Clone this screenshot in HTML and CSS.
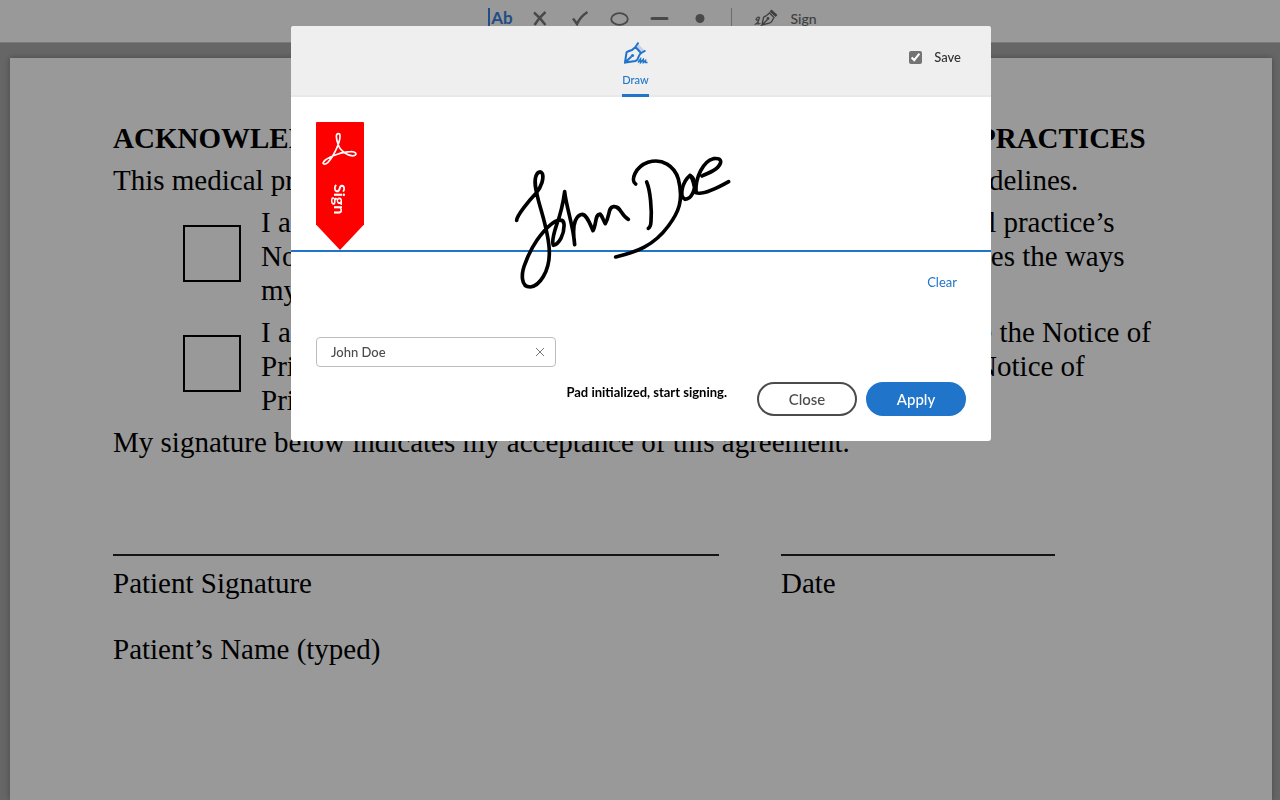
FILE: index.html
```html
<!doctype html>
<html lang="en">

<head>
    <meta charset="UTF-8">
    <meta name="viewport" content="width=device-width, initial-scale=1.0">
    <title>Sign document</title>
    <link rel="stylesheet" href="styles.css">
</head>

<body>
    <div class="toolbar">
        <button type="button" class="tool active" aria-label="Add text"><span class="text-tool">Ab</span></button>
        <button type="button" class="tool" aria-label="Add cross">
            <svg width="20" height="20" viewBox="0 0 20 20"><path d="M4 4.500Q10 9.500 15.500 17M15.500 4Q9 9.500 4.500 17" /></svg>
        </button>
        <button type="button" class="tool" aria-label="Add checkmark">
            <svg width="20" height="20" viewBox="0 0 20 20"><path d="M3 10.500Q5 13 7 16Q10 9 17.500 4" /></svg>
        </button>
        <button type="button" class="tool" aria-label="Add circle">
            <svg width="20" height="20" viewBox="0 0 20 20"><ellipse cx="9.500" cy="11" rx="8.300" ry="5.800" stroke-width="1.800" /></svg>
        </button>
        <button type="button" class="tool" aria-label="Add line">
            <svg width="20" height="20" viewBox="0 0 20 20"><path d="M2 10.500H17" stroke-width="3" stroke-linecap="round" /></svg>
        </button>
        <button type="button" class="tool" aria-label="Add dot">
            <svg width="20" height="20" viewBox="0 0 20 20"><circle cx="10" cy="10.500" r="4.500" class="fill" /></svg>
        </button>
        <span class="divider"></span>
        <button type="button" class="tool sign-tool">
            <svg width="24" height="20" viewBox="0 0 24 20">
                <path d="M8 17L9.500 9.500Q10 8.500 12 8L15.500 5L20 9.500L18.500 12Q18 14 16 15L8 17L13.500 11.500" stroke-width="1.300" />
                <circle cx="14" cy="10.500" r="1.400" class="fill" />
                <path d="M15.500 3.500L17.500 1.500L23.500 7L21.500 9Z" class="fill" />
                <path d="M0.500 16.500Q4 16 5.500 9.500Q3.500 8 2 11.500Q2.500 13 4.500 11.500L4 16L6.500 15.500" stroke-width="1.200" />
            </svg>
            <span>Sign</span>
        </button>
    </div>

    <main class="viewer">
        <article class="page">
            <h1>ACKNOWLEDGEMENT OF RECEIPT OF NOTICE OF PRIVACY PRACTICES</h1>
            <p>This medical practice is in full compliance with HIPAA general privacy guidelines.</p>
            <div class="option">
                <input type="checkbox" id="received">
                <label for="received">I acknowledge that I have been provided a copy of this medical practice’s<br>
                    Notice of Privacy Practices. This general notice clearly describes the ways<br>
                    my information is used.</label>
            </div>
            <div class="option">
                <input type="checkbox" id="declined">
                <label for="declined">I acknowledge that I have been given an opportunity to receive the Notice of<br>
                    Privacy Practices but have chosen not to accept a copy of the Notice of<br>
                    Privacy Practices.</label>
            </div>
            <p>My signature below indicates my acceptance of this agreement.</p>
            <div class="sign-row">
                <div class="sign-field">Patient Signature</div>
                <div class="sign-field date">Date</div>
            </div>
            <p class="typed-name">Patient’s Name (typed)</p>
        </article>
    </main>

    <div class="overlay">
        <div class="dialog" role="dialog" aria-label="Draw your signature">
            <header class="dialog-header">
                <span></span>
                <button type="button" class="tab">
                    <svg width="24" height="24" viewBox="0 0 24 24">
                        <path d="M14.500 3L20.500 9.500L17 12.500L12 6.500Z" class="shade" />
                        <path d="M1 21.500L2.500 11.500Q3 10.500 8 9L11.500 6L17 12Q15 14 14.500 16Q14 19 11.500 20L1 21.500L7.500 15.500M11 6.500L14.500 1.500M16.500 12.500L21.500 9.500" />
                        <circle cx="8.500" cy="14.500" r="1.600" class="dot" />
                        <path d="M14 21.500L16.500 18V21.500L19.300 18.500V21.500L21.500 19.500V21.500H23.500" stroke-width="1.500" />
                    </svg>
                    <span>Draw</span>
                </button>
                <label class="save"><input type="checkbox" checked> Save</label>
            </header>

            <div class="pad">
                <div class="ribbon">
                    <svg width="36" height="34" viewBox="0 0 108 102">
                        <path d="M50 5C39 4 43 22 49 39C55 57 80 74 96 71C108 67 100 58 86 59C62 59 24 73 10 84C-4 96 7 101 18 91C36 71 55 29 54 12C54 7 52 5 50 5Z" />
                    </svg>
                    <span>Sign</span>
                </div>
                <svg class="signature" width="250" height="160" viewBox="0 0 750 480">
                    <path d="M50 241C51 226 87 182 108 160C125 140 132 114 127 101C122 92 111 95 107 111C102 129 108 153 116 184C130 235 149 290 148 340C148 394 119 438 91 441C62 441 62 401 77 367C94 319 126 275 153 253C172 238 190 235 192 252C194 283 177 312 160 316C154 303 164 272 170 254C184 216 190 184 194 155C198 199 221 260 224 314C216 259 224 232 242 224C258 218 269 249 279 272C290 253 284 224 300 222C308 229 309 241 316 251C330 227 324 202 340 200C361 196 362 225 385 238" />
                    <path d="M440 126C451 151 456 210 453 245C452 259 449 263 445 265" />
                    <path d="M407 132C391 122 405 81 444 67C486 53 524 78 535 117C552 182 535 218 505 258C461 318 409 336 347 351" />
                    <path d="M570 106C546 126 537 171 555 178C576 178 587 145 583 127C581 115 575 109 570 106C583 118 582 149 588 158C608 167 654 143 686 125" />
                    <path d="M588 157C585 113 610 63 640 56C667 53 666 67 654 81C642 95 621 100 606 108" />
                </svg>
            </div>

            <div class="clear-row"><button type="button" class="clear">Clear</button></div>

            <div class="name-field">
                <input type="text" value="John Doe" aria-label="Your name">
                <button type="button" aria-label="Clear name">
                    <svg width="10" height="10" viewBox="0 0 10 10"><path d="M1 1L9 9M9 1L1 9" /></svg>
                </button>
            </div>

            <footer class="dialog-footer">
                <span class="status">Pad initialized, start signing.</span>
                <button type="button" class="btn">Close</button>
                <button type="button" class="btn primary">Apply</button>
            </footer>
        </div>
    </div>
</body>

</html>
```
FILE: styles.css
```css
* {
    box-sizing: border-box;
}

body {
    margin: 0;
    height: 100vh;
    overflow: hidden;
    display: flex;
    flex-direction: column;
    background: #aaa;
    font-family: Lato, "Open Sans", sans-serif;
}

button {
    background: none;
    border: none;
    padding: 0;
    font-family: inherit;
    cursor: pointer;
}

svg {
    display: block;
    fill: none;
}

/* Toolbar */
.toolbar {
    display: flex;
    flex-shrink: 0;
    justify-content: center;
    height: 43px;
    padding: 8px 0 0 17px;
    background: #fff;
    border-bottom: 1px solid #ccc;
}

.tool {
    display: flex;
    align-items: center;
    justify-content: center;
    width: 40px;
    height: 20px;
    color: #7a7a7a;
    font-size: 14px;
}

.tool svg {
    stroke: currentColor;
    stroke-width: 2.5;
}

.tool .fill {
    fill: currentColor;
    stroke: none;
}

.tool.active {
    color: #3a80db;
}

.text-tool {
    border-left: 2px solid;
    padding-left: 1px;
    font-size: 17px;
    font-weight: 700;
    line-height: 20px;
}

.divider {
    width: 1px;
    height: 20px;
    margin: 0 22px 0 11px;
    background: #b5b5b5;
}

.sign-tool {
    width: auto;
    gap: 12px;
    color: #6a6a6a;
    font-weight: 500;
}

/* Document */
.viewer {
    flex: 1;
    padding: 15px 8px 0 10px;
}

.page {
    min-height: 100%;
    padding: 63px 103px 0;
    background: #fff;
    box-shadow: 0 0 6px rgba(0, 0, 0, 0.3);
    color: #000;
    font-family: "Liberation Serif", serif;
    font-size: 29px;
    line-height: 34px;
    white-space: nowrap;
}

.page h1,
.page p {
    margin: 0 0 8px;
    font-size: inherit;
}

.option {
    display: flex;
    gap: 20px;
    margin: 0 0 8px 70px;
}

.option input {
    appearance: none;
    width: 58px;
    height: 57px;
    margin: 20px 0 0;
    border: 2px solid #000;
}

.sign-row {
    display: flex;
    gap: 62px;
    margin-top: 95px;
}

.sign-field {
    width: 606px;
    padding-top: 10px;
    border-top: 2px solid #222;
}

.sign-field.date {
    width: 274px;
}

.page .typed-name {
    margin-top: 32px;
}

/* Signature dialog */
.overlay {
    position: fixed;
    inset: 0;
    display: flex;
    align-items: flex-start;
    justify-content: center;
    padding: 26px 0 0 2px;
    background: rgba(0, 0, 0, 0.4);
}

.dialog {
    width: 700px;
    background: #fff;
    border-radius: 3px;
    overflow: hidden;
}

.dialog-header {
    display: grid;
    grid-template-columns: 1fr auto 1fr;
    height: 71px;
    padding: 0 30px 0 19px;
    background: #efefef;
    border-bottom: 2px solid #e8e8e8;
}

.tab {
    display: flex;
    flex-direction: column;
    align-items: center;
    height: 71px;
    padding-top: 15px;
    border-bottom: 3px solid #2074c9;
    color: #2074c9;
    font-size: 11px;
    font-weight: 500;
    line-height: 16px;
}

.tab svg {
    margin-bottom: 7px;
    stroke: currentColor;
    stroke-width: 2;
}

.tab .dot {
    fill: currentColor;
    stroke: none;
}

.tab .shade {
    fill: #c3d3ea;
    stroke: none;
}

.save {
    display: flex;
    align-items: center;
    justify-self: end;
    gap: 12px;
    height: 62px;
    color: #333;
    font-size: 13px;
    font-weight: 500;
}

.save input {
    width: 13px;
    height: 13px;
    margin: 0;
    accent-color: #747474;
}

.pad {
    position: relative;
    padding: 25px 25px 0;
    border-bottom: 2px solid #2074c9;
}

.ribbon {
    display: flex;
    flex-direction: column;
    align-items: center;
    width: 48px;
    height: 128px;
    padding-top: 10px;
    background: #f00;
    border-radius: 1px;
    clip-path: polygon(0 0, 100% 0, 100% 80%, 50% 100%, 0 80%);
    color: #fff;
}

.ribbon svg {
    stroke: #fff;
    stroke-width: 5;
}

.ribbon span {
    margin-top: 18px;
    font-size: 16px;
    font-weight: 700;
    line-height: 20px;
    writing-mode: vertical-rl;
}

.signature {
    position: absolute;
    top: 43px;
    left: 209px;
    stroke: #000;
    stroke-width: 11;
    stroke-linecap: round;
    stroke-linejoin: round;
}

.clear-row {
    display: flex;
    justify-content: flex-end;
    padding: 20px 34px 0;
}

.clear {
    color: #2074c9;
    font-size: 13px;
    line-height: 20px;
}

.name-field {
    display: flex;
    align-items: center;
    width: 240px;
    height: 30px;
    margin: 45px 25px 0;
    padding: 0 10px 0 14px;
    border: 1px solid #bcbcbc;
    border-radius: 4px;
}

.name-field input {
    flex: 1;
    min-width: 0;
    padding: 0;
    border: none;
    outline: none;
    color: #4b4b4b;
    font-family: inherit;
    font-size: 13px;
    font-weight: 500;
}

.name-field svg {
    stroke: #777;
}

.dialog-footer {
    display: flex;
    justify-content: flex-end;
    padding: 15px 25px 25px;
}

.status {
    margin-right: 30px;
    color: #000;
    font-size: 13px;
    font-weight: 700;
    line-height: 20px;
}

.btn {
    width: 100px;
    height: 34px;
    border: 2px solid #4b4b4b;
    border-radius: 17px;
    color: #4b4b4b;
    font-size: 15px;
    font-weight: 500;
}

.btn.primary {
    margin-left: 9px;
    border-color: #2074c9;
    background: #2074c9;
    color: #fff;
}
```
